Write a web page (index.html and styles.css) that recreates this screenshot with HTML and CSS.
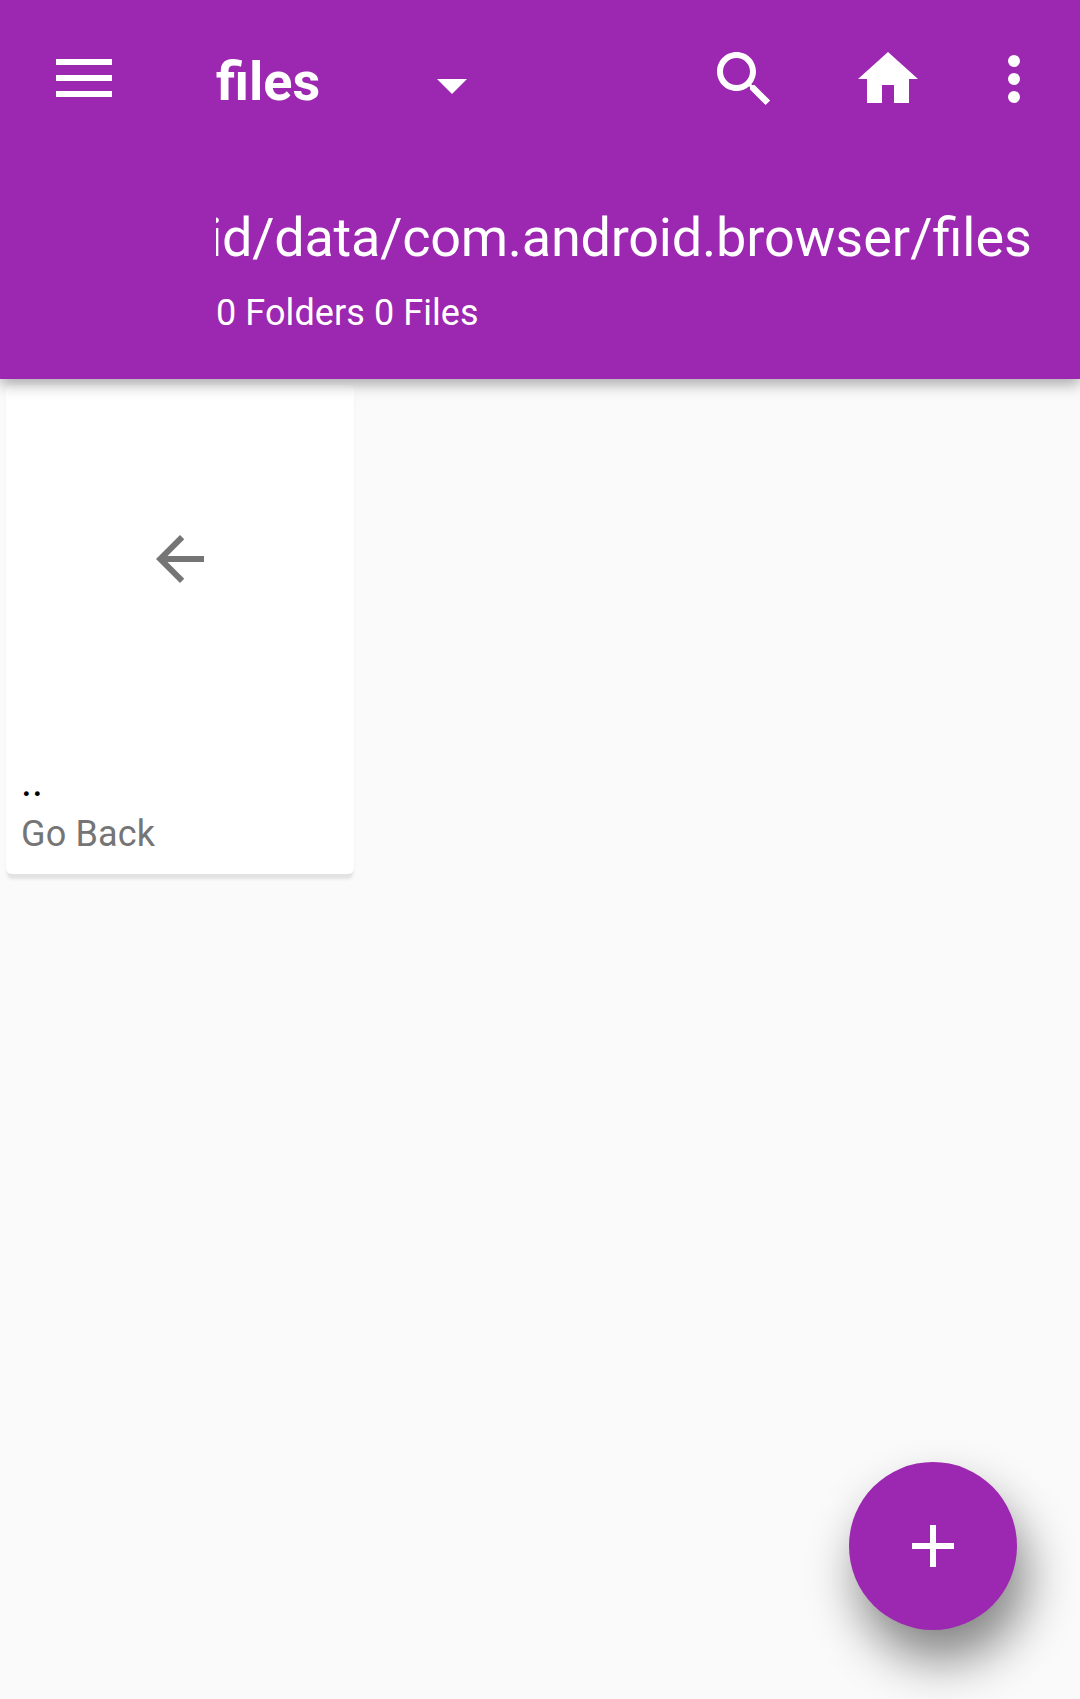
FILE: index.html
```html
<!DOCTYPE html>
<html lang="en">
<head>
<meta charset="utf-8">
<title>files</title>
<link rel="stylesheet" href="styles.css">
</head>
<body>
<div class="screen">
  <header class="app-bar">
    <div class="toolbar">
      <svg class="menu" viewBox="0 0 56 38"><path d="M0 0h56v6H0zM0 16h56v6H0zM0 32h56v6H0z"/></svg>
      <h1 class="title">files</h1>
      <svg class="icon caret" viewBox="0 0 24 24"><path d="M7 10l5 5 5-5z"/></svg>
      <nav class="actions">
        <svg class="icon" viewBox="0 0 24 24"><path d="M15.5 14h-.79l-.28-.27C15.41 12.59 16 11.11 16 9.5 16 5.91 13.09 3 9.5 3S3 5.91 3 9.5 5.91 16 9.5 16c1.61 0 3.09-.59 4.23-1.57l.27.28v.79l5.2 5.2L20.7 19.2l-5.2-5.2zm-6 0C7.01 14 5 11.99 5 9.5S7.01 5 9.5 5 14 7.01 14 9.5 11.99 14 9.5 14z"/></svg>
        <svg class="icon home" viewBox="0 0 24 24"><path d="M10 20v-6h4v6h5v-8h3L12 3 2 12h3v8z"/></svg>
        <svg class="icon more" viewBox="0 0 24 24"><circle cx="12" cy="6" r="2"/><circle cx="12" cy="12" r="2"/><circle cx="12" cy="18" r="2"/></svg>
      </nav>
    </div>
    <div class="location">
      <div class="path"><span class="parent">id/data/com.android.</span><span>browser/files</span></div>
      <div class="counts">0 Folders 0 Files</div>
    </div>
  </header>
  <main class="grid">
    <article class="card">
      <div class="thumb">
        <svg class="icon" viewBox="0 0 24 24"><path d="M20 11H7.83l5.59-5.59L12 4l-8 8 8 8 1.41-1.41L7.83 13H20v-2z"/></svg>
      </div>
      <div class="name">..</div>
      <div class="hint">Go Back</div>
    </article>
  </main>
  <button class="fab" aria-label="Add">
    <svg class="icon" viewBox="0 0 24 24"><path d="M19 13h-6v6h-2v-6H5v-2h6V5h2v6h6z"/></svg>
  </button>
</div>
</body>
</html>
```
FILE: styles.css
```css
* {
  box-sizing: border-box;
}

body {
  margin: 0;
  font-family: Roboto, sans-serif;
  background: #fafafa;
}

.screen {
  position: relative;
  height: 1699px;
  overflow: hidden;
}

.app-bar {
  position: relative;
  z-index: 1;
  height: 379px;
  background: #9c27b0;
  color: #fff;
  box-shadow: 0 5px 14px rgba(0, 0, 0, 0.34);
}

.toolbar {
  display: flex;
  align-items: center;
  height: 158px;
  padding: 0 30px 0 56px;
}

svg {
  display: block;
  flex: none;
  fill: currentColor;
}

.icon {
  width: 72px;
  height: 72px;
}

.menu {
  width: 56px;
  height: 38px;
  margin: 0 104px 2px 0;
}

.title {
  width: 200px;
  margin: 5px 0 0;
  font-size: 54px;
  font-weight: 700;
  line-height: 64px;
}

.caret {
  margin-top: 12px;
}

.actions {
  display: flex;
  margin-left: auto;
}

.home {
  margin-left: 72px;
}

.more {
  margin-left: 54px;
}

.location {
  padding: 48px 48px 0 216px;
}

.path {
  display: flex;
  justify-content: flex-end;
  overflow: hidden;
  font-size: 54px;
  line-height: 64px;
  white-space: nowrap;
}

.parent {
  letter-spacing: -0.25px;
}

.counts {
  margin-top: 22px;
  font-size: 36px;
  letter-spacing: 0.08px;
  line-height: 42px;
}

.grid {
  display: grid;
  grid-template-columns: repeat(3, 348px);
  gap: 12px;
  padding: 6px;
}

.card {
  height: 489px;
  border-radius: 6px;
  background: #fff;
  box-shadow: 0 6px 3px -1px #e2e2e2;
}

.thumb {
  display: grid;
  place-items: center;
  height: 348px;
  color: #757575;
}

.name {
  padding: 24px 0 0 15px;
  font-size: 42px;
  line-height: 50px;
  color: #000;
}

.hint {
  padding: 6px 0 0 15px;
  font-size: 36px;
  letter-spacing: 0.15px;
  line-height: 42px;
  color: #757575;
}

.fab {
  position: absolute;
  right: 63px;
  bottom: 69px;
  display: grid;
  place-items: center;
  width: 168px;
  height: 168px;
  padding: 0;
  border: 0;
  border-radius: 50%;
  background: #9c27b0;
  color: #fff;
  box-shadow: 9px 30px 50px rgba(0, 0, 0, 0.48);
}
```
